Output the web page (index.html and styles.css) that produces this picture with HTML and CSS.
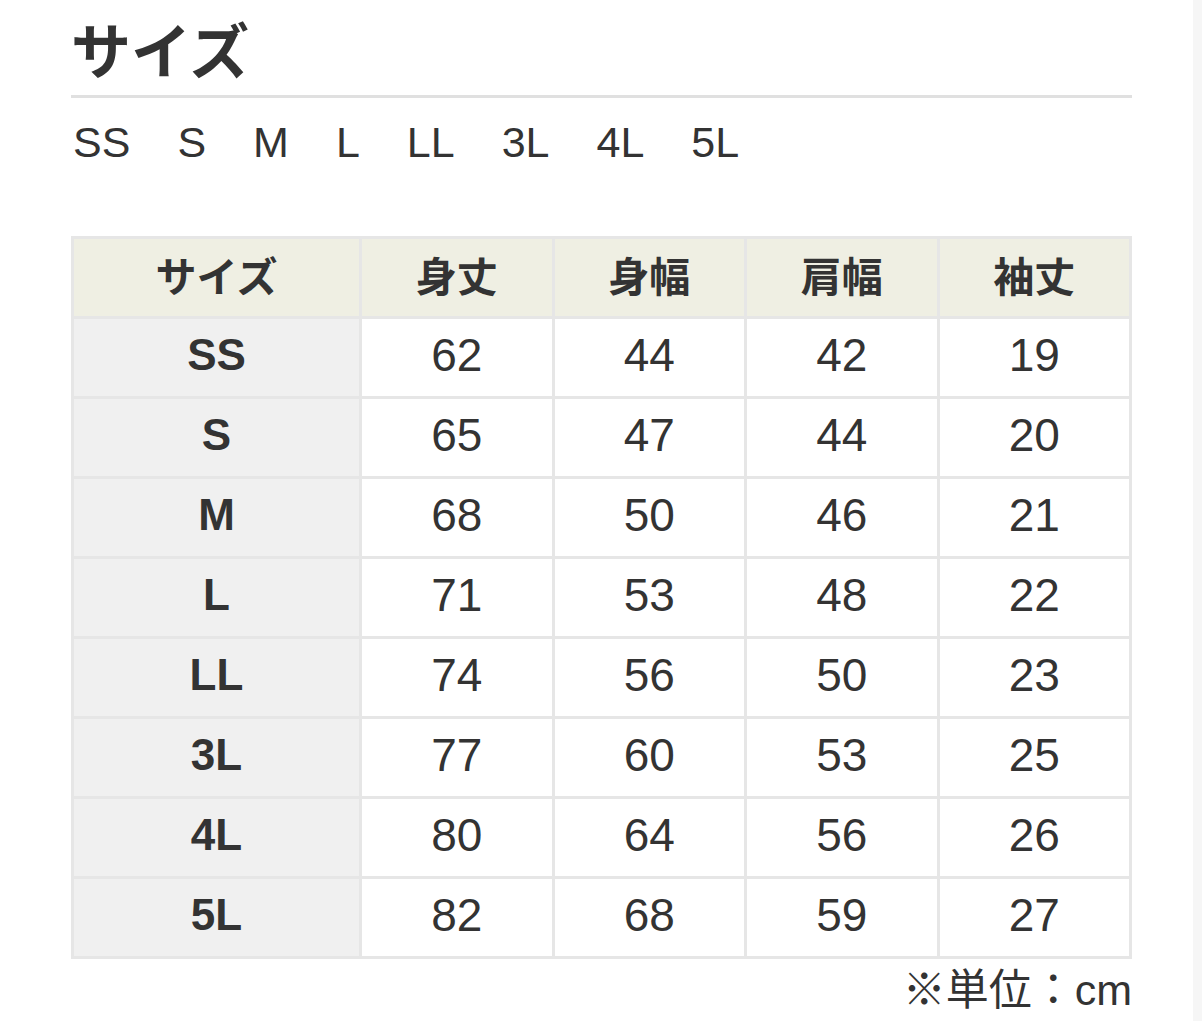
FILE: index.html
```html
<!DOCTYPE html>
<html lang="ja">
<head>
<meta charset="utf-8">
<link rel="stylesheet" href="styles.css">
</head>
<body>
<div class="page">
  <main class="content">
    <h2 class="title">サイズ</h2>
    <ul class="sizes">
      <li>SS</li><li>S</li><li>M</li><li>L</li><li>LL</li><li>3L</li><li>4L</li><li>5L</li>
    </ul>
    <table class="chart">
      <thead>
        <tr><th>サイズ</th><th>身丈</th><th>身幅</th><th>肩幅</th><th>袖丈</th></tr>
      </thead>
      <tbody>
        <tr><th>SS</th><td>62</td><td>44</td><td>42</td><td>19</td></tr>
        <tr><th>S</th><td>65</td><td>47</td><td>44</td><td>20</td></tr>
        <tr><th>M</th><td>68</td><td>50</td><td>46</td><td>21</td></tr>
        <tr><th>L</th><td>71</td><td>53</td><td>48</td><td>22</td></tr>
        <tr><th>LL</th><td>74</td><td>56</td><td>50</td><td>23</td></tr>
        <tr><th>3L</th><td>77</td><td>60</td><td>53</td><td>25</td></tr>
        <tr><th>4L</th><td>80</td><td>64</td><td>56</td><td>26</td></tr>
        <tr><th>5L</th><td>82</td><td>68</td><td>59</td><td>27</td></tr>
      </tbody>
    </table>
    <p class="note">※単位：cm</p>
  </main>
  <aside class="side"></aside>
</div>
</body>
</html>
```

FILE: styles.css
```css
html, body {
  margin: 0;
  padding: 0;
  background: #fff;
}
body {
  font-family: "Liberation Sans", "Noto Sans CJK JP", sans-serif;
  color: #333;
}
.page {
  display: flex;
  min-height: 1021px;
}
.content {
  width: 1061px;
  margin-left: 71px;
  margin-right: 61px;
}
.side {
  flex: 1;
  background: #f6f6f6;
}
.title {
  margin: 0;
  padding-top: 16px;
  height: 98px;
  box-sizing: border-box;
  font-size: 60px;
  line-height: 64px;
  font-weight: bold;
  font-family: "Noto Sans CJK JP", sans-serif;
  border-bottom: 3px solid #e0e0e0;
}
.sizes {
  list-style: none;
  margin: 0;
  padding: 20px 0 0 2px;
  display: flex;
  gap: 47px;
  font-size: 43px;
  line-height: 48px;
  height: 138px;
  box-sizing: border-box;
}
.chart {
  width: 1061px;
  border-collapse: collapse;
  table-layout: fixed;
  border: 3px solid #e6e6e6;
}
.chart th, .chart td {
  border: 3px solid #e6e6e6;
  height: 72px;
  padding: 0 0 5px;
  text-align: center;
  vertical-align: middle;
}
.chart thead th {
  background: #efefe3;
  font-family: "Noto Sans CJK JP", sans-serif;
  font-size: 41px;
  font-weight: bold;
  height: 69px;
  padding-bottom: 8px;
}
.chart thead th:first-child {
  width: 285px;
}
.chart tbody th {
  background: #f0f0f0;
  font-size: 44px;
  font-weight: bold;
}
.chart td {
  font-size: 46px;
  font-weight: normal;
}
.note {
  margin: 6px 0 0;
  text-align: right;
  font-size: 43px;
  line-height: 50px;
}
```
